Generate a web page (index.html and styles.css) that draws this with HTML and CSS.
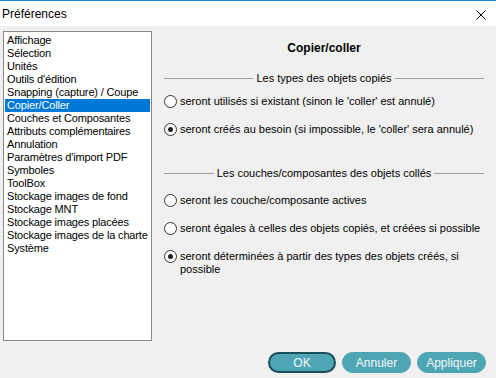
FILE: index.html
```html
<!DOCTYPE html>
<html lang="fr">
<head>
  <meta charset="UTF-8">
  <title>Préférences</title>
  <link rel="stylesheet" href="styles.css">
</head>
<body>
  <div class="dialog">
    <!-- Barre de titre -->
    <div class="titlebar">
      <span class="title">Préférences</span>
      <svg class="close" width="10" height="10" viewBox="0 0 10 10">
        <path d="M0.5 0.5 L9.5 9.5 M9.5 0.5 L0.5 9.5" stroke="#000" stroke-width="1" fill="none"/>
      </svg>
    </div>

    <div class="content">
      <!-- Liste des catégories -->
      <ul class="categories">
        <li>Affichage</li>
        <li>Sélection</li>
        <li>Unités</li>
        <li>Outils d'édition</li>
        <li>Snapping (capture) / Coupe</li>
        <li class="selected">Copier/Coller</li>
        <li>Couches et Composantes</li>
        <li>Attributs complémentaires</li>
        <li>Annulation</li>
        <li>Paramètres d'import PDF</li>
        <li>Symboles</li>
        <li>ToolBox</li>
        <li>Stockage images de fond</li>
        <li>Stockage MNT</li>
        <li>Stockage images placées</li>
        <li>Stockage images de la charte</li>
        <li>Système</li>
      </ul>

      <!-- Panneau de réglages -->
      <div class="panel">
        <h2>Copier/coller</h2>

        <div class="group first">
          <div class="legend"><span>Les types des objets copiés</span></div>
          <label class="option"><span class="radio"></span>seront utilisés si existant (sinon le 'coller' est annulé)</label>
          <label class="option"><span class="radio checked"></span>seront créés au besoin (si impossible, le 'coller' sera annulé)</label>
        </div>

        <div class="group second">
          <div class="legend"><span>Les couches/composantes des objets collés</span></div>
          <label class="option"><span class="radio"></span>seront les couche/composante actives</label>
          <label class="option"><span class="radio"></span>seront égales à celles des objets copiés, et créées si possible</label>
          <label class="option"><span class="radio checked"></span>seront déterminées à partir des types des objets créés, si<br>possible</label>
        </div>
      </div>
    </div>

    <!-- Boutons -->
    <div class="buttons">
      <button class="default">OK</button>
      <button>Annuler</button>
      <button>Appliquer</button>
    </div>
  </div>
</body>
</html>
```

FILE: styles.css
```css
body {
  margin: 0;
  padding: 0;
  background-color: #f0f0f0;
  font-family: "Liberation Sans", Arial, sans-serif;
  font-size: 11px;
  color: #000;
}

.dialog {
  width: 496px;
  height: 378px;
  overflow: hidden;
}

.titlebar {
  height: 25px;
  background: white;
  border-top: 1px solid #1883d7;
  display: flex;
  align-items: center;
  justify-content: space-between;
  padding: 0 10px 0 2px;
}

.title {
  font-size: 12px;
  margin-top: 1px;
}

.close {
  display: block;
  margin-top: 3px;
}

.content {
  display: flex;
  padding: 5px 12px 0 3px;
}

.categories {
  list-style: none;
  margin: 0;
  padding: 2px 1px 0 1px;
  width: 145px;
  height: 306px;
  background: white;
  border: 1px solid #828790;
  overflow: hidden;
}

.categories li {
  height: 13px;
  line-height: 13px;
  padding-left: 2px;
  white-space: nowrap;
  letter-spacing: -0.15px;
}

.categories li.selected {
  background-color: #0078d7;
  color: white;
}

.panel {
  flex: 1;
  margin-left: 12px;
  display: flex;
  flex-direction: column;
}

.panel h2 {
  margin: 10px 0 0 0;
  font-size: 12px;
  line-height: 14px;
  text-align: center;
}

.group {
  display: flex;
  flex-direction: column;
}

.group.first {
  margin-top: 17px;
}

.group.second {
  margin-top: 31px;
}

.legend {
  display: flex;
  align-items: center;
  height: 13px;
  line-height: 13px;
}

.legend::before,
.legend::after {
  content: "";
  flex: 1;
  height: 1px;
  background: #a0a0a0;
}

.legend span {
  padding: 0 3px;
}

.option {
  display: flex;
  align-items: flex-start;
  line-height: 13px;
  margin-top: 15px;
}

.group.first .option:first-of-type {
  margin-top: 10px;
}

.group.second .option:first-of-type {
  margin-top: 14px;
}

.radio {
  flex: none;
  width: 11px;
  height: 11px;
  border: 1px solid #333;
  border-radius: 50%;
  background: white;
  margin-right: 3px;
  position: relative;
}

.radio.checked::after {
  content: "";
  position: absolute;
  left: 3px;
  top: 3px;
  width: 5px;
  height: 5px;
  border-radius: 50%;
  background: #222;
}

.buttons {
  display: flex;
  justify-content: flex-end;
  gap: 6px;
  padding: 11px 10px 0 0;
}

button {
  width: 69px;
  height: 21px;
  border: 1px solid #4ba3b2;
  border-radius: 11px;
  background-color: #4ea5b3;
  color: #f4f8f8;
  font-family: "Liberation Sans", Arial, sans-serif;
  font-size: 12px;
  padding: 0;
}

button.default {
  width: 68px;
  border: 2px solid #1b4e5c;
}
```
